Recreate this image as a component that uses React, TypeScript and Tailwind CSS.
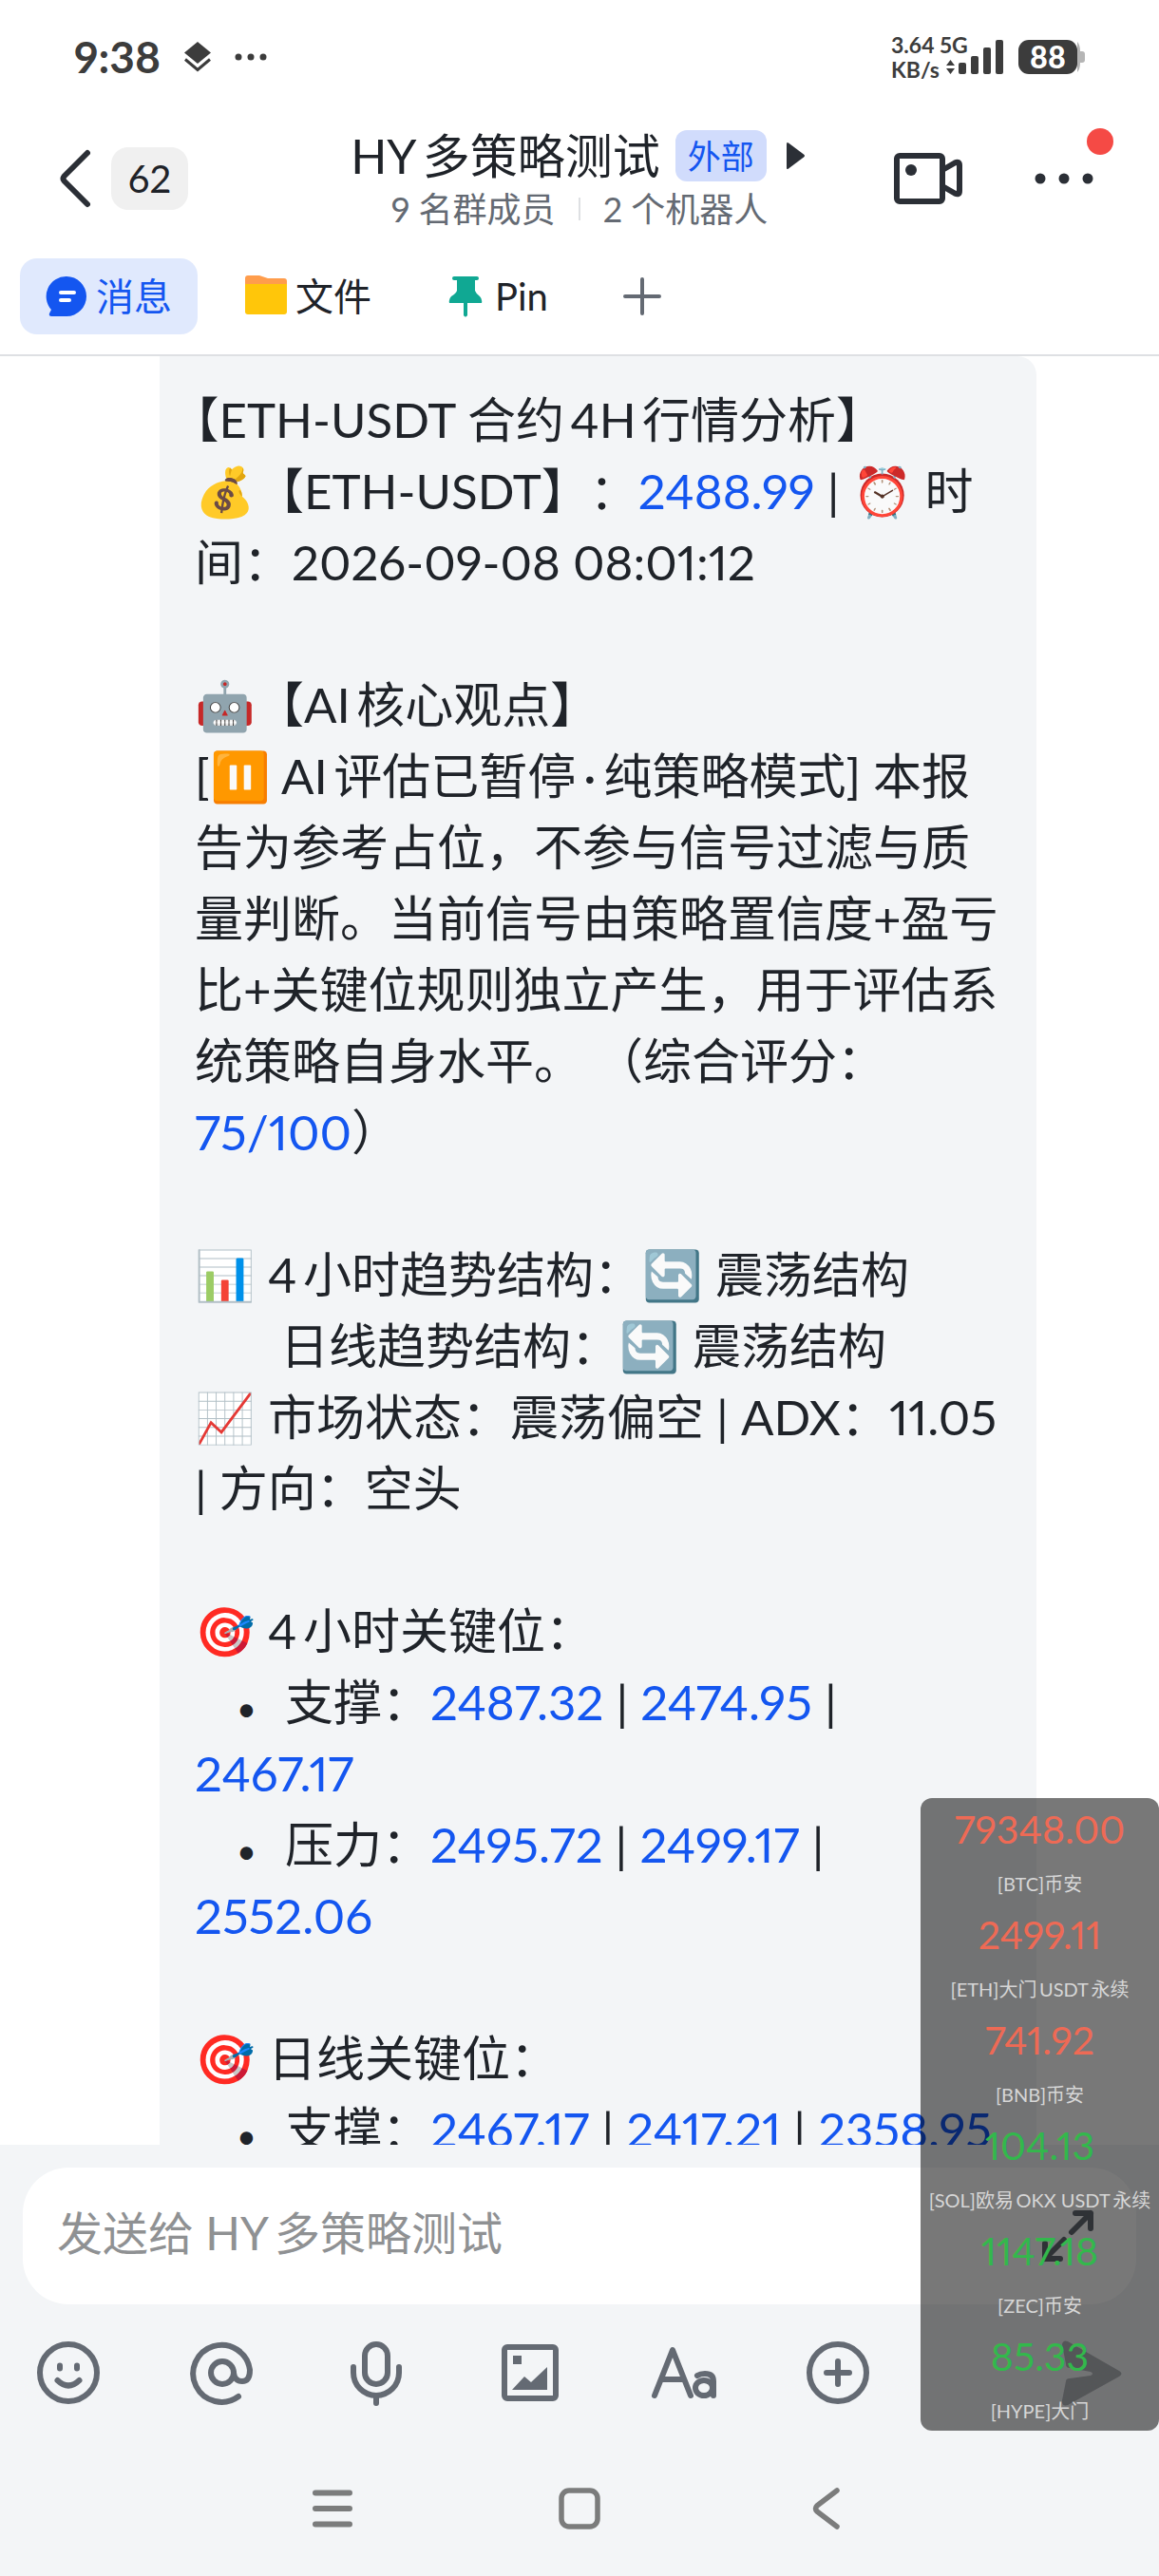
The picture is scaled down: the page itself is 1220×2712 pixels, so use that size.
import type { ReactNode } from "react";

const quotes = [
  { price: "79348.00", label: "[BTC]币安", up: false },
  { price: "2499.11", label: "[ETH]大门USDT永续", up: false },
  { price: "741.92", label: "[BNB]币安", up: false },
  { price: "104.13", label: "[SOL]欧易OKX USDT永续", up: true },
  { price: "1147.18", label: "[ZEC]币安", up: true },
  { price: "85.33", label: "[HYPE]大门", up: true },
];

const Num = ({ children }: { children: ReactNode }) => (
  <a href="#" className="text-[#1456f0]">{children}</a>
);

const Emoji = ({ children }: { children: ReactNode }) => (
  <span className="inline-block w-16 leading-none">{children}</span>
);

const Line = ({ children }: { children?: ReactNode }) => (
  <div className="h-[75px] whitespace-nowrap">{children}</div>
);

const Bullet = () => (
  <span className="inline-block w-[95px] pl-[44px] align-middle text-[36px] leading-none">•</span>
);

const StatusBar = () => {
  return (
    <div className="flex h-[120px] shrink-0 items-center justify-between px-[78px] text-[#3c3c3c]">
      <div className="flex items-center gap-6">
        <span className="text-[46px] font-bold leading-none">9:38</span>
        <svg width="30" height="32" viewBox="0 0 30 32" fill="currentColor">
          <path d="M15 0 29 11.5 15 23 1 11.5Z" />
          <path d="M2 18.5 15 29.5 28 18.5" fill="none" stroke="currentColor" strokeWidth="3" />
        </svg>
        <svg width="34" height="8" viewBox="0 0 34 8" fill="currentColor">
          <circle cx="4" cy="4" r="3.5" />
          <circle cx="17" cy="4" r="3.5" />
          <circle cx="30" cy="4" r="3.5" />
        </svg>
      </div>
      <div className="flex items-center">
        <div className="w-[70px] text-[23px] font-bold leading-[26px]">
          <div className="whitespace-nowrap">3.64 5G</div>
          <div>KB/s</div>
        </div>
        <svg width="64" height="40" viewBox="0 0 64 40" fill="currentColor" className="-ml-3">
          <path d="M0 29 4.5 23 9 29ZM0 32H9L4.5 38Z" />
          <rect x="13" y="26" width="8" height="12" rx="2" />
          <rect x="26" y="19" width="8" height="19" rx="2" />
          <rect x="39" y="10" width="8" height="28" rx="2" />
          <rect x="52" y="2" width="8" height="36" rx="2" />
        </svg>
        <div className="ml-3 flex h-9 w-[62px] items-center justify-center rounded-[11px] bg-[#3c3c3c] text-[32px] font-black leading-none text-white">
          88
        </div>
        <svg width="8" height="36" viewBox="0 0 8 36" fill="#b5b5b5">
          <path d="M0 2Q3 5 3 12H5Q8 12 8 15V21Q8 24 5 24H3Q3 31 0 34Z" />
        </svg>
      </div>
    </div>
  );
};

const Header = () => {
  return (
    <header className="grid h-[136px] shrink-0 grid-cols-[1fr_auto_1fr] items-center px-12 text-[#1f2329]">
      <div className="flex items-center gap-5 pl-3">
        <button aria-label="返回">
          <svg width="37" height="64" viewBox="0 0 37 64" fill="none" stroke="#2b2f36" strokeWidth="6" strokeLinecap="round" strokeLinejoin="round">
            <path d="M32 5 7.5 29.5Q5.5 32 7.5 34.5L32 59" />
          </svg>
        </button>
        <span className="flex h-[66px] w-[81px] items-center justify-center rounded-[18px] bg-[#f0f0f0] text-[40px]">62</span>
      </div>
      <div className="text-center">
        <div className="flex items-center justify-center gap-4">
          <h1 className="text-[50px] leading-[60px]">HY多策略测试</h1>
          <span className="rounded-xl bg-[#d1dcfc] px-[13px] text-[35px] leading-[54px] text-[#1456f0]">外部</span>
          <svg width="28" height="30" viewBox="0 0 28 30" fill="#2b2f36">
            <path d="M5 2.5Q5 0 7 1.5L23 13.5Q25 15 23 16.5L7 28.5Q5 30 5 27.5Z" />
          </svg>
        </div>
        <div className="mt-1 flex items-center justify-center gap-6 text-[36px] leading-[44px] text-[#646a73]">
          <span>9 名群成员</span>
          <span className="h-6 w-0.5 bg-[#dee0e3]" />
          <span>2 个机器人</span>
        </div>
      </div>
      <div className="flex items-center justify-end gap-[57px]">
        <button aria-label="视频会议">
          <svg width="76" height="58" viewBox="0 0 76 58" fill="none" stroke="#2b2f36" strokeWidth="6" strokeLinejoin="round">
            <rect x="5" y="5" width="48" height="48" rx="3" />
            <path d="M53 20 66 12.5Q71 10 71 15V42Q71 47 66 44.500L53 37" />
            <circle cx="20" cy="20" r="6" fill="#2b2f36" stroke="none" />
          </svg>
        </button>
        <button aria-label="更多" className="relative">
          <svg width="100" height="66" viewBox="0 0 100 66" fill="#2b2f36">
            <circle cx="23" cy="33" r="5.5" />
            <circle cx="48" cy="33" r="5.5" />
            <circle cx="73" cy="33" r="5.5" />
          </svg>
          <span className="absolute -top-5 right-0 size-7 rounded-full bg-[#f54a45]" />
        </button>
      </div>
    </header>
  );
};

const Tabs = () => {
  return (
    <nav className="flex h-[119px] shrink-0 items-start gap-[23px] border-b-2 border-[#dee0e3] px-[21px] pt-4 text-[40px] text-[#1f2329]">
      <button className="flex h-20 items-center gap-[9px] rounded-[18px] bg-[#e0e9fd] px-[27px] text-[#1456f0]">
        <svg width="44" height="44" viewBox="0 0 44 44">
          <path d="M22 1A21 21 0 0 1 22 43H6Q3 43 4 40L6 36A21 21 0 0 1 22 1Z" fill="#1456f0" />
          <path d="M16 18H30M16 26H25" stroke="#fff" strokeWidth="4" strokeLinecap="round" />
        </svg>
        消息
      </button>
      <button className="flex h-20 items-center gap-[9px] px-[27px]">
        <svg width="44" height="44" viewBox="0 0 44 44">
          <path d="M0 3Q0 0 3 0H15L24 3H41Q44 3 44 6V11H0Z" fill="#ff9d4c" />
          <path d="M0 9H44V38Q44 41 41 41H3Q0 41 0 38Z" fill="#ffc60a" />
        </svg>
        文件
      </button>
      <button className="flex h-20 items-center gap-[9px] px-[27px]">
        <svg width="44" height="44" viewBox="0 0 44 44" fill="#10a893">
          <path d="M10 1H34Q36 1 36 3Q36 5 34 5H32V16Q33 19 37 22Q40 25 39 29H5Q4 25 7 22Q12 19 13 16V5H10Q8 5 8 3Q8 1 10 1ZM20 29H24V42Q22 45 20 42Z" />
        </svg>
        Pin
      </button>
      <button aria-label="添加标签页" className="flex h-20 items-center px-[27px]">
        <svg width="44" height="44" viewBox="0 0 44 44" stroke="#646a73" strokeWidth="4" strokeLinecap="round">
          <path d="M22 4V40M4 22H40" />
        </svg>
      </button>
    </nav>
  );
};

const Message = () => {
  return (
    <main className="min-h-0 flex-1 overflow-hidden bg-white pl-[168px] pr-[129px]">
      <div className="rounded-tr-[20px] bg-[#f3f5f7] px-[37px] pt-[29px] text-[51px] leading-[75px] text-[#1f2329] [text-spacing-trim:space-all]">
        <div className="h-[75px] whitespace-nowrap [text-spacing-trim:trim-start]">【ETH-USDT 合约4H行情分析】</div>
        <Line><Emoji>💰</Emoji>【ETH-USDT】：<Num>2488.99</Num> | <Emoji>⏰</Emoji> 时</Line>
        <Line>间：2026-09-08 08:01:12</Line>
        <Line />
        <Line><Emoji>🤖</Emoji>【AI核心观点】</Line>
        <Line>[<Emoji>⏸️</Emoji> AI评估已暂停<span className="px-2">·</span>纯策略模式] 本报</Line>
        <Line>告为参考占位，不参与信号过滤与质</Line>
        <Line>量判断。当前信号由策略置信度+盈亏</Line>
        <Line>比+关键位规则独立产生，用于评估系</Line>
        <Line>统策略自身水平。 （综合评分：</Line>
        <Line><Num>75/100</Num>）</Line>
        <Line />
        <Line><Emoji>📊</Emoji> 4小时趋势结构：<Emoji>🔄</Emoji> 震荡结构</Line>
        <div className="h-[75px] whitespace-nowrap pl-[90px]">日线趋势结构：<Emoji>🔄</Emoji> 震荡结构</div>
        <Line><Emoji>📈</Emoji> 市场状态：震荡偏空 | ADX：11.05</Line>
        <Line>| 方向：空头</Line>
        <Line />
        <Line><Emoji>🎯</Emoji> 4小时关键位：</Line>
        <Line><Bullet />支撑：<Num>2487.32</Num> | <Num>2474.95</Num> |</Line>
        <Line><Num>2467.17</Num></Line>
        <Line><Bullet />压力：<Num>2495.72</Num> | <Num>2499.17</Num> |</Line>
        <Line><Num>2552.06</Num></Line>
        <Line />
        <Line><Emoji>🎯</Emoji> 日线关键位：</Line>
        <Line><Bullet />支撑：<Num>2467.17</Num> | <Num>2417.21</Num> | <Num>2358.95</Num></Line>
      </div>
    </main>
  );
};

const Composer = () => {
  return (
    <footer className="shrink-0 bg-[#f3f5f7] pt-6">
      <div className="mx-6 flex h-36 items-center rounded-[48px] bg-white pl-9 pr-[42px]">
        <input
          aria-label="发送消息"
          placeholder="发送给 HY多策略测试"
          className="h-20 min-w-0 flex-1 bg-transparent pb-2 text-[48px] text-[#1f2329] outline-none placeholder:text-[#8f9193]"
        />
        <button aria-label="展开">
          <svg width="60" height="60" viewBox="0 0 60 60" fill="none" stroke="#646a73" strokeWidth="6" strokeLinecap="round" strokeLinejoin="round">
            <path d="M38 6H54V22M54 6 34 26M22 54H6V38M6 54 26 34" />
          </svg>
        </button>
      </div>
      <div className="flex h-[144px] items-center gap-[90px] px-9 text-[#646a73]">
        <button aria-label="表情">
          <svg width="72" height="72" viewBox="0 0 72 72" fill="none" stroke="currentColor" strokeWidth="6" strokeLinecap="round">
            <circle cx="36" cy="36" r="30" />
            <path d="M27 28.5V31.5M45 28.5V31.5" />
            <path d="M24.5 44Q36 55 47.5 44" />
          </svg>
        </button>
        <button aria-label="提及">
          <svg width="72" height="72" viewBox="0 0 72 72" fill="none" stroke="currentColor" strokeWidth="6" strokeLinecap="round">
            <circle cx="36" cy="36" r="12" />
            <path d="M48 36Q49 45 57 45Q65 45 65 33A30 30 0 1 0 53 61" />
          </svg>
        </button>
        <button aria-label="语音">
          <svg width="72" height="72" viewBox="0 0 72 72" fill="none" stroke="currentColor" strokeWidth="6" strokeLinecap="round">
            <rect x="24" y="6" width="24" height="42" rx="12" />
            <path d="M12 30V36A24 24 0 0 0 60 36V30M36 60V68" />
          </svg>
        </button>
        <button aria-label="图片">
          <svg width="72" height="72" viewBox="0 0 72 72" fill="currentColor">
            <rect x="9" y="9" width="54" height="54" rx="3" fill="none" stroke="currentColor" strokeWidth="6" />
            <path d="M18 18H27V27H18ZM17 54 30 40 37 46 54 30V54Z" />
          </svg>
        </button>
        <button aria-label="文字格式">
          <svg width="72" height="72" viewBox="0 0 72 72" fill="none" stroke="currentColor" strokeWidth="6" strokeLinecap="round" strokeLinejoin="round">
            <path d="M5 60 24 12 43 60M12 43H36" />
            <ellipse cx="57" cy="52" rx="9" ry="8" />
            <path d="M50 39Q53 37 58 37Q67 37 67 45V60" />
          </svg>
        </button>
        <button aria-label="更多功能">
          <svg width="72" height="72" viewBox="0 0 72 72" fill="none" stroke="currentColor" strokeWidth="6" strokeLinecap="round">
            <circle cx="36" cy="36" r="30" />
            <path d="M36 24V48M24 36H48" />
          </svg>
        </button>
        <button aria-label="发送" className="ml-auto">
          <svg width="72" height="72" viewBox="0 0 72 72" fill="#b2b6bc">
            <path d="M6 6Q7 1 12 3L66 34Q71 37 66 40L12 70Q5 72 6 65L10 45Q10 42 14 42L36 39Q40 37 36 35L14 31Q10 31 10 27Z" />
          </svg>
        </button>
      </div>
      <div className="flex h-[142px] items-center justify-center gap-[200px]">
        <button aria-label="最近任务">
          <svg width="60" height="60" viewBox="0 0 60 60" stroke="#7b7c7c" strokeWidth="6" strokeLinecap="round">
            <path d="M12 13.5H48M12 30H48M12 46.5H48" />
          </svg>
        </button>
        <button aria-label="主屏幕">
          <svg width="60" height="60" viewBox="0 0 60 60" fill="none" stroke="#7b7c7c" strokeWidth="5.5">
            <rect x="11" y="11" width="38" height="38" rx="8" />
          </svg>
        </button>
        <button aria-label="返回上一页">
          <svg width="60" height="60" viewBox="0 0 60 60" fill="none" stroke="#7b7c7c" strokeWidth="5.5" strokeLinecap="round" strokeLinejoin="round">
            <path d="M41 11 20 27Q17 30 20 33L41 49" />
          </svg>
        </button>
      </div>
    </footer>
  );
};

// floating ticker, sits on top of the chat
const Ticker = () => {
  return (
    <aside className="absolute bottom-[153px] right-0 w-[251px] rounded-xl bg-black/53 text-center">
      {quotes.map((q) => (
        <div key={q.price}>
          <div className={q.up ? "text-[41px] leading-[66px] text-[#33b84c]" : "text-[41px] leading-[66px] text-[#ee6a55]"}>
            {q.price}
          </div>
          <div className="whitespace-nowrap pt-[3px] text-[20px] leading-[42px] text-[#d6d6d6]">{q.label}</div>
        </div>
      ))}
    </aside>
  );
};

const App = () => {
  return (
    <div className="relative flex h-screen flex-col overflow-hidden bg-white font-['Lato','Noto_Sans_CJK_SC',sans-serif] proportional-nums [text-autospace:normal]">
      <StatusBar />
      <Header />
      <Tabs />
      <Message />
      <Composer />
      <Ticker />
    </div>
  );
};

export default App;
